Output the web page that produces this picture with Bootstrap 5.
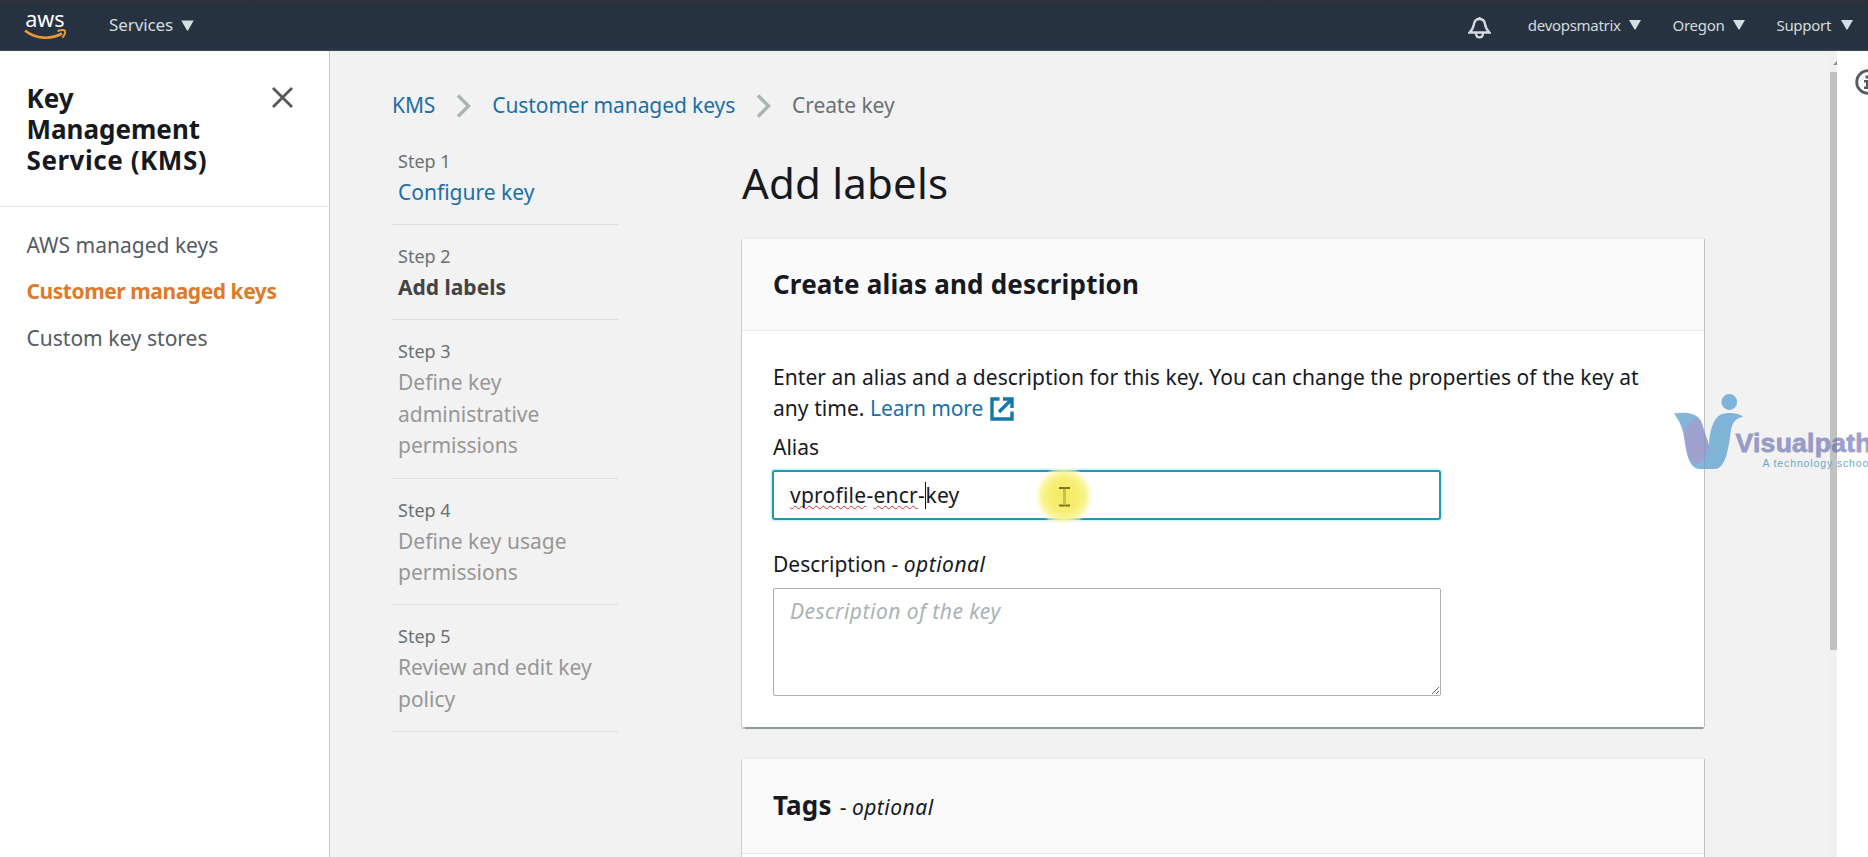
<!DOCTYPE html>
<html lang="en">
<head>
<meta charset="utf-8">
<title>Key Management Service</title>
<link rel="stylesheet" href="https://cdn.jsdelivr.net/npm/bootstrap@5.3.0/dist/css/bootstrap.min.css">
<script src="https://cdn.jsdelivr.net/npm/bootstrap@5.3.0/dist/js/bootstrap.bundle.min.js"></script>
<style>
:root{--ink:#16191f;--link:#1b6fa9;--muted:#6b7073}
html,body{height:100%;overflow:hidden}
body{font-family:"Noto Sans","Open Sans",sans-serif;font-size:21px;line-height:31px;color:var(--ink);background:#f2f2f2}
a{color:var(--link);text-decoration:none}
.topbar{height:51px;flex:none;background:linear-gradient(#2c3338 0,#2b3439 3px,#26323f 5px,#273342 49px,#3f4a57 51px);color:#d5dbdf}
.topbar .aws-logo{margin-left:24px;margin-top:-2px;overflow:visible}
.menu-item{display:flex;align-items:center;font-size:15px;letter-spacing:-.3px;line-height:24px;margin-top:-1px}
.menu-item.services{font-size:17px;letter-spacing:-.1px;margin-left:41px;margin-top:-1px}
.side{width:330px;flex:none;background:#fff;border-right:1.5px solid #c4c8c9}
.side-head{padding:31.5px 35px 30px 26.5px;border-bottom:1px solid #e6e8e8}
.side-head h2{font-size:26px;line-height:31px;font-weight:700;margin:0;width:200px}
.kms-line{letter-spacing:.55px;white-space:nowrap}
.side-nav{padding:23px 26.5px;gap:15.7px}
.side-nav .nav-link{padding:0;color:#545b64}
.side-nav .nav-link.active{color:#dd7a2b;font-weight:700;letter-spacing:-.44px}
.content{padding:39px 0 0 62px;min-width:0}
.crumbs{height:31px;letter-spacing:-.1px}
.steps{width:226px;flex:none;margin:0;padding:0}
.steps li{list-style:none;padding:16px 6px 15.8px;border-bottom:1px solid #dcdedf;line-height:31.4px;color:#979797}
.steps li:first-child{padding-top:.4px}
.steps span{display:block;font-size:18px;line-height:31px;color:var(--muted)}
.steps b{color:#444}
.work{margin-left:124px;width:962px;flex:none;padding-top:12px}
.work h1{font-size:42px;line-height:50px;font-weight:400;margin:0 0 31px;letter-spacing:.2px}
.panel-card{background:#fff;border:0;border-radius:0;margin-bottom:32px;box-shadow:0 1.5px 1px #8d9a9a,-1px 0 0 #d0d3d3,1px 0 0 #c3c7c7,0 -1px 0 #ececec;color:var(--ink)}
.panel-card .card-header{background:#fafafa;border-bottom:1px solid #e7e9e9;border-radius:0;padding:30.7px 31px 30px}
.panel-card h3{font-size:26px;line-height:31px;font-weight:700;margin:0;letter-spacing:.18px}
.panel-card .card-body{padding:31px 30px 31px 31px}
.panel-card .intro{letter-spacing:.05px}
.opt{font-style:italic;letter-spacing:.5px}
.tag-note{font-size:21px;margin-left:1px;letter-spacing:0}
.alias-box{margin:6.5px 0 0 -1px;width:669px;height:50px;border:2px solid #2595b2;border-radius:3px;box-shadow:0 0 0 1.5px #c9f6fb;padding:8px 16px;letter-spacing:.24px;position:relative;background:#fff}
.alias-box u{text-decoration:underline wavy #d03036 1px;text-underline-offset:2px;text-decoration-skip-ink:none}
.caret{display:inline-block;width:1.5px;height:27px;background:#111;margin:0 -1px -6px 0}
.halo{position:absolute;left:260px;top:-6px;width:60px;height:60px;background:radial-gradient(closest-side,#f4ea64 0,#f6ee72 50%,#faf59a 75%,rgba(255,253,220,.5) 92%,rgba(255,255,255,0) 100%);border-radius:50%}
.halo svg{display:block}
.desc-box{width:668px;height:108px;margin-top:8.5px;border:1px solid #a9b0b0;border-radius:2px;padding:7px 16px;font-size:21px;line-height:31px;display:block;resize:both}
.desc-box::placeholder{color:#a9b3b3;font-style:italic;opacity:1;letter-spacing:.5px}
.scroll-col{width:7px;flex:none;padding-top:12px;background:#f0f0f0}
.thumb{height:578px;margin-top:7px;background:#c1c1c1}
.scroll-col svg,.topbar svg{display:block}
.help{width:31px;flex:none;background:#fff;overflow:hidden;padding:18px 0 0 18px}
.help svg{display:block}
.watermark{position:absolute;left:1670px;top:388px}
</style>
</head>
<body>
<div class="d-flex flex-column vh-100 overflow-hidden">
<nav class="topbar d-flex align-items-center">
  <svg class="aws-logo" width="44" height="32" viewBox="0 0 44 32"><text x="1.2" y="17.5" font-family="Noto Sans" font-size="22" fill="#fff" textLength="39.5" lengthAdjust="spacingAndGlyphs">aws</text><path d="M1 21.500C12 30.500 27 30.500 38 24.500" fill="none" stroke="#e8983a" stroke-width="2.600"/><path d="M33.500 22.200C37 20.800 40 21 41 21.800C41.500 23.500 40.300 26.500 38.300 28.600" fill="none" stroke="#e8983a" stroke-width="2"/></svg>
  <div class="menu-item services">Services<svg class="ms-2" width="13" height="11"><path d="M.3 .5H12.700L7 10.500H6Z" fill="#d5dfe3"/></svg></div>
  <div class="d-flex align-items-center ms-auto" style="padding-right:15px">
    <svg width="23" height="24" viewBox="0 0 23 24" style="margin:4px 37px 0 0"><path d="M11.500 1v2M1.500 16.500H21.500C18 13.500 17.500 11 17 8C16.500 5 14.500 3 11.500 3S6.500 5 6 8C5.500 11 5 13.500 1.500 16.500ZM8 17c0 5.800 7 5.800 7 0" fill="none" stroke="#d5dbdf" stroke-width="2.300"/></svg>
    <div class="menu-item">devopsmatrix<svg style="margin:0 32px 0 8px" width="12" height="10"><path d="M0 0H12L6.500 9.500H5.500Z" fill="#d5dfe3"/></svg></div>
    <div class="menu-item">Oregon<svg style="margin:0 31px 0 9px" width="12" height="10"><path d="M0 0H12L6.500 9.500H5.500Z" fill="#d5dfe3"/></svg></div>
    <div class="menu-item">Support<svg style="margin-left:10px" width="12" height="10"><path d="M0 0H12L6.500 9.500H5.500Z" fill="#d5dfe3"/></svg></div>
  </div>
</nav>
<div class="d-flex flex-grow-1 overflow-hidden">
  <aside class="side">
    <div class="side-head d-flex justify-content-between">
      <h2>Key Management <span class="kms-line">Service (KMS)</span></h2>
      <svg width="24" height="24" viewBox="0 0 24 24" style="margin-top:2px;flex:none"><path d="M3 3L22 22M22 3L3 22" stroke="#545658" stroke-width="2.800"/></svg>
    </div>
    <nav class="side-nav nav flex-column">
      <a class="nav-link" href="#">AWS managed keys</a>
      <a class="nav-link active" href="#">Customer managed keys</a>
      <a class="nav-link" href="#">Custom key stores</a>
    </nav>
  </aside>
  <main class="content flex-grow-1">
    <div class="crumbs d-flex align-items-center">
      <a href="#">KMS</a>
      <svg width="16" height="24" style="margin:0 20px 0 21px"><path d="M2 1.500L12.500 12L2 22.500" fill="none" stroke="#aab3b3" stroke-width="3.400"/></svg>
      <a href="#">Customer managed keys</a>
      <svg width="16" height="24" style="margin:0 20px 0 21px"><path d="M2 1.500L12.500 12L2 22.500" fill="none" stroke="#aab3b3" stroke-width="3.400"/></svg>
      <span style="color:#6b7073">Create key</span>
    </div>
    <div class="d-flex" style="padding-top:24.7px">
      <ol class="steps">
        <li><span>Step 1</span><a href="#">Configure key</a></li>
        <li><span>Step 2</span><b>Add labels</b></li>
        <li><span>Step 3</span>Define key administrative permissions</li>
        <li><span>Step 4</span>Define key usage permissions</li>
        <li><span>Step 5</span>Review and edit key policy</li>
      </ol>
      <div class="work">
        <h1>Add labels</h1>
        <section class="card panel-card">
          <div class="card-header"><h3>Create alias and description</h3></div>
          <div class="card-body">
            <div class="intro">Enter an alias and a description for this key. You can change the properties of the key at any time. <a href="#" style="letter-spacing:-.1px">Learn more <svg width="24" height="24" viewBox="0 0 24 24" style="margin:-4px 0 0 1px"><path d="M9.500 2H2V22H22V14.500M13 2H22V11M21.500 2.500L9 15" fill="none" stroke="#1277ab" stroke-width="3.400"/></svg></a></div>
            <div class="mt-2">Alias</div>
            <div class="alias-box"><span class="halo"><svg width="60" height="60"><path d="M25 22h4.500q1 0 1 1q0-1 1-1H36M25 39.500h4.500q1 0 1-1q0 1 1 1H36" fill="none" stroke="#77751f" stroke-width="1.800"/><path d="M30.500 23v16" stroke="#c9c14e" stroke-width="3"/></svg></span><u>vprofile</u>-<u>encr</u>-<i class="caret"></i>key</div>
            <div style="margin-top:29px">Description - <span class="opt">optional</span></div>
            <textarea class="desc-box" placeholder="Description of the key"></textarea>
          </div>
        </section>
        <section class="card panel-card">
          <div class="card-header"><h3>Tags <span class="tag-note fw-normal">- <span class="opt">optional</span></span></h3></div>
          <div class="card-body"></div>
        </section>
      </div>
    </div>
  </main>
  <div class="scroll-col"><svg width="7" height="4" style="margin-top:-2px"><path d="M3 4L7 0V4Z" fill="#8b8b8b"/></svg><div class="thumb"></div></div>
  <aside class="help"><svg width="26" height="26" viewBox="0 0 26 26"><circle cx="13" cy="13" r="11.300" fill="none" stroke="#545b64" stroke-width="2.800"/><path d="M10.500 6.500h5v3h-5zM9 11h6.500v6.500H17.500v2.500H9v-2.500h2v-4H9z" fill="#545b64"/></svg></aside>
</div>
</div>
<svg class="watermark" width="198" height="90" viewBox="1670 388 198 90">
  <g opacity=".8">
  <circle cx="1729.300" cy="402" r="7.900" fill="#63a4d1"/>
  <path d="M1674 413.500C1686 411.500 1698 413 1701.500 422L1709 445C1709.500 432 1713 418 1721 414.500C1727 412 1737 412.500 1743 416.500C1735 418.500 1732 424 1731 430C1729 444 1727 460 1721 466Q1718.500 469 1714 469H1699C1688 468 1686 450 1683.500 434C1682 426 1678 419 1674 413.500Z" fill="#63a4d1"/>
  <path d="M1684 434C1685 426 1691 419 1697 418.500C1702 420 1704 432 1708 445C1707 455 1704 464 1697 464C1688 464 1686 448 1684 434Z" fill="#868bc3"/>
  </g>
  <g opacity=".62"><text x="1735.500" y="452.200" font-family="Liberation Sans" font-weight="700" font-size="26.500" fill="#6267ad" stroke="#6267ad" stroke-width=".8" textLength="136">Visualpath</text></g>
  <text x="1762.500" y="466.500" font-family="Liberation Sans Narrow, Liberation Sans" font-size="10.500" fill="#5ba1c9" opacity=".9" textLength="109">A technology school</text>
</svg>
</body>
</html>
